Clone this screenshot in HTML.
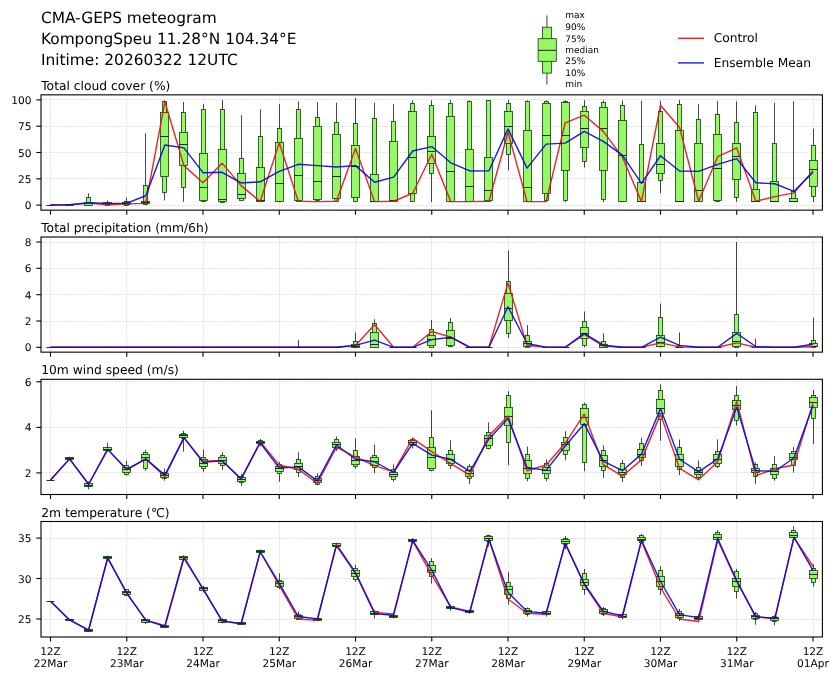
<!DOCTYPE html>
<html><head><meta charset="utf-8"><title>CMA-GEPS meteogram</title>
<style>html,body{margin:0;padding:0;background:#fff}svg{display:block;will-change:transform}text{font-family:"DejaVu Sans","Liberation Sans",sans-serif;fill:#000;text-rendering:geometricPrecision}.t{font-size:15.4px}.pt{font-size:12.3px}.tk{font-size:10.6px}.lg{font-size:12.25px}.bl{font-size:9px}.grid{stroke:#cccccc;stroke-opacity:0.7;stroke-width:0.7;stroke-dasharray:2.8 0.9;fill:none}.box{fill:#98f766;stroke:#0e4206;stroke-width:0.8}.wh{stroke:#000;stroke-opacity:0.85;stroke-width:0.85;fill:none}.md{stroke:#0a1a05;stroke-width:0.9;fill:none}.c{stroke:#e3141a;stroke-opacity:0.92;stroke-width:1.4;fill:none;stroke-linejoin:round}.m{stroke:#0808de;stroke-opacity:0.92;stroke-width:1.4;fill:none;stroke-linejoin:round}.ax{fill:none;stroke:#000;stroke-width:1.1}.tick{stroke:#000;stroke-width:1.1}</style></head><body>
<svg width="840" height="680" viewBox="0 0 840 680">
<rect width="840" height="680" fill="#fff"/>
<text class="t" x="40.9" y="22.5">CMA-GEPS meteogram</text>
<text class="t" x="40.9" y="43.6">KompongSpeu 11.28°N 104.34°E</text>
<text class="t" x="40.9" y="64.6">Initime: 20260322 12UTC</text>
<g><line class="wh" style="stroke-width:1.2;stroke:#444" x1="546.9" y1="15.4" x2="546.9" y2="84.6"/>
<rect class="box" x="542.5" y="27.2" width="9" height="45.9"/>
<rect class="box" x="538.1" y="38.7" width="18.2" height="22.6"/>
<line class="md" x1="538.1" y1="50.3" x2="556.3" y2="50.3"/></g>
<text class="bl" x="565.3" y="17.7">max</text>
<text class="bl" x="565.3" y="30.1">90%</text>
<text class="bl" x="565.3" y="41.6">75%</text>
<text class="bl" x="565.3" y="53.1">median</text>
<text class="bl" x="565.3" y="64.2">25%</text>
<text class="bl" x="565.3" y="75.8">10%</text>
<text class="bl" x="565.3" y="86.7">min</text>
<line class="c" style="stroke-width:1.4" x1="678" y1="38.3" x2="704" y2="38.3"/><text class="lg" x="713.7" y="42.2">Control</text>
<line class="m" style="stroke-width:1.4" x1="678" y1="62.9" x2="704" y2="62.9"/><text class="lg" x="713.7" y="67.2">Ensemble Mean</text>
<g>
<text class="pt" x="41.2" y="89.95">Total cloud cover (%)</text>
<line class="grid" x1="50.5" y1="94.85" x2="50.5" y2="210.15"/>
<line class="grid" x1="126.5" y1="94.85" x2="126.5" y2="210.15"/>
<line class="grid" x1="203.5" y1="94.85" x2="203.5" y2="210.15"/>
<line class="grid" x1="279.5" y1="94.85" x2="279.5" y2="210.15"/>
<line class="grid" x1="355.5" y1="94.85" x2="355.5" y2="210.15"/>
<line class="grid" x1="431.5" y1="94.85" x2="431.5" y2="210.15"/>
<line class="grid" x1="508.5" y1="94.85" x2="508.5" y2="210.15"/>
<line class="grid" x1="584.5" y1="94.85" x2="584.5" y2="210.15"/>
<line class="grid" x1="660.5" y1="94.85" x2="660.5" y2="210.15"/>
<line class="grid" x1="736.5" y1="94.85" x2="736.5" y2="210.15"/>
<line class="grid" x1="813.5" y1="94.85" x2="813.5" y2="210.15"/>
<line class="grid" x1="41" y1="99.5" x2="822.4" y2="99.5"/>
<line class="grid" x1="41" y1="126.5" x2="822.4" y2="126.5"/>
<line class="grid" x1="41" y1="152.5" x2="822.4" y2="152.5"/>
<line class="grid" x1="41" y1="178.5" x2="822.4" y2="178.5"/>
<line class="grid" x1="41" y1="205.5" x2="822.4" y2="205.5"/>
<rect class="box" x="67.5" y="204.5" width="4" height="1"/>
<rect class="box" x="65.5" y="204.5" width="8" height="1"/>
<rect class="box" x="86.5" y="197.5" width="4" height="8"/>
<rect class="box" x="84.5" y="202.5" width="8" height="3"/>
<rect class="box" x="105.5" y="202.5" width="4" height="3"/>
<rect class="box" x="103.5" y="202.5" width="8" height="2"/>
<rect class="box" x="124.5" y="201.5" width="4" height="4"/>
<rect class="box" x="122.5" y="202.5" width="8" height="2"/>
<rect class="box" x="143.5" y="185.5" width="4" height="19"/>
<rect class="box" x="141.5" y="201.5" width="8" height="2"/>
<rect class="box" x="162.5" y="101.5" width="4" height="91"/>
<rect class="box" x="160.5" y="112.5" width="8" height="64"/>
<rect class="box" x="181.5" y="112.5" width="4" height="75"/>
<rect class="box" x="179.5" y="132.5" width="8" height="33"/>
<rect class="box" x="201.5" y="109.5" width="4" height="92"/>
<rect class="box" x="199.5" y="153.5" width="8" height="47"/>
<rect class="box" x="220.5" y="109.5" width="4" height="93"/>
<rect class="box" x="218.5" y="149.5" width="8" height="52"/>
<rect class="box" x="239.5" y="158.5" width="4" height="42"/>
<rect class="box" x="237.5" y="173.5" width="8" height="25"/>
<rect class="box" x="258.5" y="136.5" width="4" height="65"/>
<rect class="box" x="256.5" y="167.5" width="8" height="34"/>
<rect class="box" x="277.5" y="128.5" width="4" height="73"/>
<rect class="box" x="275.5" y="142.5" width="8" height="59"/>
<rect class="box" x="296.5" y="109.5" width="4" height="92"/>
<rect class="box" x="294.5" y="138.5" width="8" height="62"/>
<rect class="box" x="315.5" y="117.5" width="4" height="83"/>
<rect class="box" x="313.5" y="126.5" width="8" height="73"/>
<rect class="box" x="334.5" y="122.5" width="4" height="79"/>
<rect class="box" x="332.5" y="134.5" width="8" height="64"/>
<rect class="box" x="353.5" y="123.5" width="4" height="78"/>
<rect class="box" x="351.5" y="145.5" width="8" height="52"/>
<rect class="box" x="372.5" y="118.5" width="4" height="83"/>
<rect class="box" x="370.5" y="174.5" width="8" height="27"/>
<rect class="box" x="391.5" y="121.5" width="4" height="80"/>
<rect class="box" x="389.5" y="141.5" width="8" height="60"/>
<rect class="box" x="410.5" y="103.5" width="4" height="98"/>
<rect class="box" x="408.5" y="111.5" width="8" height="82"/>
<rect class="box" x="429.5" y="105.5" width="4" height="68"/>
<rect class="box" x="427.5" y="136.5" width="8" height="27"/>
<rect class="box" x="448.5" y="103.5" width="4" height="98"/>
<rect class="box" x="446.5" y="116.5" width="8" height="85"/>
<rect class="box" x="467.5" y="101.5" width="4" height="100"/>
<rect class="box" x="465.5" y="149.5" width="8" height="52"/>
<rect class="box" x="486.5" y="100.5" width="4" height="101"/>
<rect class="box" x="484.5" y="157.5" width="8" height="43"/>
<rect class="box" x="506.5" y="103.5" width="4" height="51"/>
<rect class="box" x="504.5" y="111.5" width="8" height="32"/>
<rect class="box" x="525.5" y="101.5" width="4" height="100"/>
<rect class="box" x="523.5" y="130.5" width="8" height="71"/>
<rect class="box" x="544.5" y="101.5" width="4" height="99"/>
<rect class="box" x="542.5" y="103.5" width="8" height="90"/>
<rect class="box" x="563.5" y="101.5" width="4" height="99"/>
<rect class="box" x="561.5" y="102.5" width="8" height="68"/>
<rect class="box" x="582.5" y="106.5" width="4" height="55"/>
<rect class="box" x="580.5" y="111.5" width="8" height="36"/>
<rect class="box" x="601.5" y="102.5" width="4" height="97"/>
<rect class="box" x="599.5" y="107.5" width="8" height="63"/>
<rect class="box" x="620.5" y="105.5" width="4" height="96"/>
<rect class="box" x="618.5" y="120.5" width="8" height="81"/>
<rect class="box" x="639.5" y="144.5" width="4" height="57"/>
<rect class="box" x="637.5" y="182.5" width="8" height="19"/>
<rect class="box" x="658.5" y="111.5" width="4" height="69"/>
<rect class="box" x="656.5" y="143.5" width="8" height="30"/>
<rect class="box" x="677.5" y="104.5" width="4" height="97"/>
<rect class="box" x="675.5" y="130.5" width="8" height="71"/>
<rect class="box" x="696.5" y="119.5" width="4" height="82"/>
<rect class="box" x="694.5" y="143.5" width="8" height="58"/>
<rect class="box" x="715.5" y="114.5" width="4" height="87"/>
<rect class="box" x="713.5" y="134.5" width="8" height="66"/>
<rect class="box" x="734.5" y="122.5" width="4" height="75"/>
<rect class="box" x="732.5" y="143.5" width="8" height="36"/>
<rect class="box" x="753.5" y="112.5" width="4" height="89"/>
<rect class="box" x="751.5" y="189.5" width="8" height="12"/>
<rect class="box" x="772.5" y="143.5" width="4" height="58"/>
<rect class="box" x="770.5" y="181.5" width="8" height="20"/>
<rect class="box" x="791.5" y="191.5" width="4" height="10"/>
<rect class="box" x="789.5" y="198.5" width="8" height="3"/>
<rect class="box" x="811.5" y="145.5" width="4" height="51"/>
<rect class="box" x="809.5" y="160.5" width="8" height="26"/>
<line class="md" x1="46.5" y1="205.5" x2="54.5" y2="205.5"/>
<line class="wh" x1="69.5" y1="204.3" x2="69.5" y2="204.5"/>
<line class="md" x1="65.5" y1="204.5" x2="73.5" y2="204.5"/>
<line class="wh" x1="88.5" y1="193.25" x2="88.5" y2="197.5"/>
<line class="md" x1="84.5" y1="203.5" x2="92.5" y2="203.5"/>
<line class="wh" x1="107.5" y1="200.49" x2="107.5" y2="202.5"/>
<line class="md" x1="103.5" y1="204.5" x2="111.5" y2="204.5"/>
<line class="wh" x1="126.5" y1="197.44" x2="126.5" y2="201.5"/>
<line class="md" x1="122.5" y1="203.5" x2="130.5" y2="203.5"/>
<line class="wh" x1="145.5" y1="133.25" x2="145.5" y2="185.5"/>
<line class="wh" x1="145.5" y1="204.5" x2="145.5" y2="205.06"/>
<line class="md" x1="141.5" y1="202.5" x2="149.5" y2="202.5"/>
<line class="wh" x1="164.5" y1="100.3" x2="164.5" y2="101.5"/>
<line class="wh" x1="164.5" y1="192.5" x2="164.5" y2="200.49"/>
<line class="md" x1="160.5" y1="136.5" x2="168.5" y2="136.5"/>
<line class="wh" x1="183.5" y1="101.82" x2="183.5" y2="112.5"/>
<line class="wh" x1="183.5" y1="187.5" x2="183.5" y2="201.82"/>
<line class="md" x1="179.5" y1="144.5" x2="187.5" y2="144.5"/>
<line class="wh" x1="203.5" y1="104.11" x2="203.5" y2="109.5"/>
<line class="wh" x1="203.5" y1="201.5" x2="203.5" y2="202.01"/>
<line class="md" x1="199.5" y1="187.5" x2="207.5" y2="187.5"/>
<line class="wh" x1="222.5" y1="99.92" x2="222.5" y2="109.5"/>
<line class="md" x1="218.5" y1="199.5" x2="226.5" y2="199.5"/>
<line class="wh" x1="241.5" y1="115.16" x2="241.5" y2="158.5"/>
<line class="wh" x1="241.5" y1="200.5" x2="241.5" y2="200.49"/>
<line class="md" x1="237.5" y1="194.5" x2="245.5" y2="194.5"/>
<line class="wh" x1="260.5" y1="109.44" x2="260.5" y2="136.5"/>
<line class="wh" x1="260.5" y1="201.5" x2="260.5" y2="202.01"/>
<line class="md" x1="256.5" y1="200.5" x2="264.5" y2="200.5"/>
<line class="wh" x1="279.5" y1="104.11" x2="279.5" y2="128.5"/>
<line class="wh" x1="279.5" y1="201.5" x2="279.5" y2="202.01"/>
<line class="md" x1="275.5" y1="183.5" x2="283.5" y2="183.5"/>
<line class="wh" x1="298.5" y1="101.44" x2="298.5" y2="109.5"/>
<line class="wh" x1="298.5" y1="201.5" x2="298.5" y2="202.01"/>
<line class="md" x1="294.5" y1="175.5" x2="302.5" y2="175.5"/>
<line class="wh" x1="317.5" y1="102.2" x2="317.5" y2="117.5"/>
<line class="wh" x1="317.5" y1="200.5" x2="317.5" y2="201.63"/>
<line class="md" x1="313.5" y1="181.5" x2="321.5" y2="181.5"/>
<line class="wh" x1="336.5" y1="102.78" x2="336.5" y2="122.5"/>
<line class="wh" x1="336.5" y1="201.5" x2="336.5" y2="202.01"/>
<line class="md" x1="332.5" y1="176.5" x2="340.5" y2="176.5"/>
<line class="wh" x1="355.5" y1="98.01" x2="355.5" y2="123.5"/>
<line class="wh" x1="355.5" y1="201.5" x2="355.5" y2="202.01"/>
<line class="md" x1="351.5" y1="166.5" x2="359.5" y2="166.5"/>
<line class="wh" x1="374.5" y1="102.78" x2="374.5" y2="118.5"/>
<line class="wh" x1="374.5" y1="201.5" x2="374.5" y2="202.01"/>
<line class="md" x1="370.5" y1="201.5" x2="378.5" y2="201.5"/>
<line class="wh" x1="393.5" y1="104.11" x2="393.5" y2="121.5"/>
<line class="wh" x1="393.5" y1="201.5" x2="393.5" y2="202.01"/>
<line class="md" x1="389.5" y1="200.5" x2="397.5" y2="200.5"/>
<line class="wh" x1="412.5" y1="100.3" x2="412.5" y2="103.5"/>
<line class="wh" x1="412.5" y1="201.5" x2="412.5" y2="202.01"/>
<line class="md" x1="408.5" y1="157.5" x2="416.5" y2="157.5"/>
<line class="wh" x1="431.5" y1="100.3" x2="431.5" y2="105.5"/>
<line class="wh" x1="431.5" y1="173.5" x2="431.5" y2="202.01"/>
<line class="md" x1="427.5" y1="151.5" x2="435.5" y2="151.5"/>
<line class="wh" x1="450.5" y1="99.92" x2="450.5" y2="103.5"/>
<line class="wh" x1="450.5" y1="201.5" x2="450.5" y2="202.01"/>
<line class="md" x1="446.5" y1="171.5" x2="454.5" y2="171.5"/>
<line class="wh" x1="469.5" y1="100.3" x2="469.5" y2="101.5"/>
<line class="wh" x1="469.5" y1="201.5" x2="469.5" y2="202.01"/>
<line class="md" x1="465.5" y1="186.5" x2="473.5" y2="186.5"/>
<line class="wh" x1="488.5" y1="99.92" x2="488.5" y2="100.5"/>
<line class="wh" x1="488.5" y1="201.5" x2="488.5" y2="202.01"/>
<line class="md" x1="484.5" y1="190.5" x2="492.5" y2="190.5"/>
<line class="wh" x1="508.5" y1="99.92" x2="508.5" y2="103.5"/>
<line class="wh" x1="508.5" y1="154.5" x2="508.5" y2="170.4"/>
<line class="md" x1="504.5" y1="126.5" x2="512.5" y2="126.5"/>
<line class="wh" x1="527.5" y1="100.3" x2="527.5" y2="101.5"/>
<line class="wh" x1="527.5" y1="201.5" x2="527.5" y2="202.01"/>
<line class="md" x1="523.5" y1="187.5" x2="531.5" y2="187.5"/>
<line class="wh" x1="546.5" y1="100.3" x2="546.5" y2="101.5"/>
<line class="wh" x1="546.5" y1="200.5" x2="546.5" y2="202.01"/>
<line class="md" x1="542.5" y1="135.5" x2="550.5" y2="135.5"/>
<line class="wh" x1="565.5" y1="100.3" x2="565.5" y2="101.5"/>
<line class="wh" x1="565.5" y1="200.5" x2="565.5" y2="202.01"/>
<line class="md" x1="561.5" y1="135.5" x2="569.5" y2="135.5"/>
<line class="wh" x1="584.5" y1="100.3" x2="584.5" y2="106.5"/>
<line class="wh" x1="584.5" y1="161.5" x2="584.5" y2="167.54"/>
<line class="md" x1="580.5" y1="128.5" x2="588.5" y2="128.5"/>
<line class="wh" x1="603.5" y1="100.3" x2="603.5" y2="102.5"/>
<line class="wh" x1="603.5" y1="199.5" x2="603.5" y2="202.01"/>
<line class="md" x1="599.5" y1="128.5" x2="607.5" y2="128.5"/>
<line class="wh" x1="622.5" y1="100.3" x2="622.5" y2="105.5"/>
<line class="wh" x1="622.5" y1="201.5" x2="622.5" y2="202.01"/>
<line class="md" x1="618.5" y1="155.5" x2="626.5" y2="155.5"/>
<line class="wh" x1="641.5" y1="100.87" x2="641.5" y2="144.5"/>
<line class="wh" x1="641.5" y1="201.5" x2="641.5" y2="202.01"/>
<line class="md" x1="637.5" y1="201.5" x2="645.5" y2="201.5"/>
<line class="wh" x1="660.5" y1="100.87" x2="660.5" y2="111.5"/>
<line class="wh" x1="660.5" y1="180.5" x2="660.5" y2="193.25"/>
<line class="md" x1="656.5" y1="164.5" x2="664.5" y2="164.5"/>
<line class="wh" x1="679.5" y1="99.92" x2="679.5" y2="104.5"/>
<line class="wh" x1="679.5" y1="201.5" x2="679.5" y2="202.01"/>
<line class="md" x1="675.5" y1="201.5" x2="683.5" y2="201.5"/>
<line class="wh" x1="698.5" y1="104.11" x2="698.5" y2="119.5"/>
<line class="wh" x1="698.5" y1="201.5" x2="698.5" y2="202.01"/>
<line class="md" x1="694.5" y1="190.5" x2="702.5" y2="190.5"/>
<line class="wh" x1="717.5" y1="100.87" x2="717.5" y2="114.5"/>
<line class="wh" x1="717.5" y1="201.5" x2="717.5" y2="202.01"/>
<line class="md" x1="713.5" y1="168.5" x2="721.5" y2="168.5"/>
<line class="wh" x1="736.5" y1="101.44" x2="736.5" y2="122.5"/>
<line class="wh" x1="736.5" y1="197.5" x2="736.5" y2="201.82"/>
<line class="md" x1="732.5" y1="156.5" x2="740.5" y2="156.5"/>
<line class="wh" x1="755.5" y1="105.25" x2="755.5" y2="112.5"/>
<line class="wh" x1="755.5" y1="201.5" x2="755.5" y2="202.01"/>
<line class="md" x1="751.5" y1="201.5" x2="759.5" y2="201.5"/>
<line class="wh" x1="774.5" y1="102.78" x2="774.5" y2="143.5"/>
<line class="wh" x1="774.5" y1="201.5" x2="774.5" y2="202.01"/>
<line class="md" x1="770.5" y1="201.5" x2="778.5" y2="201.5"/>
<line class="wh" x1="793.5" y1="101.44" x2="793.5" y2="191.5"/>
<line class="wh" x1="793.5" y1="201.5" x2="793.5" y2="202.01"/>
<line class="md" x1="789.5" y1="201.5" x2="797.5" y2="201.5"/>
<line class="wh" x1="813.5" y1="128.87" x2="813.5" y2="145.5"/>
<line class="wh" x1="813.5" y1="196.5" x2="813.5" y2="202.01"/>
<line class="md" x1="809.5" y1="169.5" x2="817.5" y2="169.5"/>
<polyline class="c" points="50.5,205.06 69.56,204.87 88.62,203.16 107.69,204.68 126.75,203.92 145.81,203.35 164.88,101.82 183.94,165.63 203,182.78 222.06,163.16 241.12,185.63 260.19,201.44 279.25,142.78 298.31,201.25 317.38,201.63 336.44,201.25 355.5,148.49 374.56,201.63 393.62,201.25 412.69,193.25 431.75,154.2 450.81,201.63 469.88,201.63 488.94,201.25 508,132.3 527.06,201.63 546.12,201.63 565.19,122.78 584.25,115.16 603.31,131.35 622.38,157.06 641.44,201.63 660.5,105.25 679.56,127.54 698.62,201.25 717.69,156.68 736.75,147.92 755.81,201.25 774.88,196.68 793.94,192.87 813,170.78"/>
<polyline class="m" points="50.5,205.06 69.56,204.68 88.62,202.78 107.69,203.54 126.75,203.16 145.81,195.73 164.88,145.06 183.94,147.92 203,172.68 222.06,172.3 241.12,182.97 260.19,181.82 279.25,171.35 298.31,164.3 317.38,165.63 336.44,166.97 355.5,165.63 374.56,182.2 393.62,177.06 412.69,150.97 431.75,146.59 450.81,162.78 469.88,170.97 488.94,170.78 508,128.87 527.06,168.11 546.12,144.11 565.19,143.16 584.25,131.35 603.31,141.44 622.38,155.16 641.44,183.35 660.5,155.73 679.56,170.97 698.62,171.35 717.69,164.3 736.75,158.59 755.81,182.78 774.88,183.73 793.94,191.35 813,172.3"/>
<rect class="ax" x="41" y="94.85" width="781.4" height="115.3"/>
<line class="tick" x1="50.5" y1="210.15" x2="50.5" y2="214.75"/>
<line class="tick" x1="126.75" y1="210.15" x2="126.75" y2="214.75"/>
<line class="tick" x1="203" y1="210.15" x2="203" y2="214.75"/>
<line class="tick" x1="279.25" y1="210.15" x2="279.25" y2="214.75"/>
<line class="tick" x1="355.5" y1="210.15" x2="355.5" y2="214.75"/>
<line class="tick" x1="431.75" y1="210.15" x2="431.75" y2="214.75"/>
<line class="tick" x1="508" y1="210.15" x2="508" y2="214.75"/>
<line class="tick" x1="584.25" y1="210.15" x2="584.25" y2="214.75"/>
<line class="tick" x1="660.5" y1="210.15" x2="660.5" y2="214.75"/>
<line class="tick" x1="736.75" y1="210.15" x2="736.75" y2="214.75"/>
<line class="tick" x1="813" y1="210.15" x2="813" y2="214.75"/>
<line class="tick" x1="36.3" y1="99.9" x2="41" y2="99.9"/>
<text class="tk" text-anchor="end" x="31.6" y="103.9">100</text>
<line class="tick" x1="36.3" y1="126.2" x2="41" y2="126.2"/>
<text class="tk" text-anchor="end" x="31.6" y="130.2">75</text>
<line class="tick" x1="36.3" y1="152.5" x2="41" y2="152.5"/>
<text class="tk" text-anchor="end" x="31.6" y="156.5">50</text>
<line class="tick" x1="36.3" y1="178.8" x2="41" y2="178.8"/>
<text class="tk" text-anchor="end" x="31.6" y="182.8">25</text>
<line class="tick" x1="36.3" y1="205.1" x2="41" y2="205.1"/>
<text class="tk" text-anchor="end" x="31.6" y="209.1">0</text>
</g>
<g>
<text class="pt" x="41.2" y="232.1">Total precipitation (mm/6h)</text>
<line class="grid" x1="50.5" y1="237" x2="50.5" y2="352.15"/>
<line class="grid" x1="126.5" y1="237" x2="126.5" y2="352.15"/>
<line class="grid" x1="203.5" y1="237" x2="203.5" y2="352.15"/>
<line class="grid" x1="279.5" y1="237" x2="279.5" y2="352.15"/>
<line class="grid" x1="355.5" y1="237" x2="355.5" y2="352.15"/>
<line class="grid" x1="431.5" y1="237" x2="431.5" y2="352.15"/>
<line class="grid" x1="508.5" y1="237" x2="508.5" y2="352.15"/>
<line class="grid" x1="584.5" y1="237" x2="584.5" y2="352.15"/>
<line class="grid" x1="660.5" y1="237" x2="660.5" y2="352.15"/>
<line class="grid" x1="736.5" y1="237" x2="736.5" y2="352.15"/>
<line class="grid" x1="813.5" y1="237" x2="813.5" y2="352.15"/>
<line class="grid" x1="41" y1="242.5" x2="822.4" y2="242.5"/>
<line class="grid" x1="41" y1="268.5" x2="822.4" y2="268.5"/>
<line class="grid" x1="41" y1="294.5" x2="822.4" y2="294.5"/>
<line class="grid" x1="41" y1="321.5" x2="822.4" y2="321.5"/>
<line class="grid" x1="41" y1="347.5" x2="822.4" y2="347.5"/>
<rect class="box" x="353.5" y="341.5" width="4" height="6"/>
<rect class="box" x="351.5" y="344.5" width="8" height="3"/>
<rect class="box" x="372.5" y="323.5" width="4" height="24"/>
<rect class="box" x="370.5" y="332.5" width="8" height="15"/>
<rect class="box" x="429.5" y="329.5" width="4" height="18"/>
<rect class="box" x="427.5" y="335.5" width="8" height="10"/>
<rect class="box" x="448.5" y="322.5" width="4" height="24"/>
<rect class="box" x="446.5" y="330.5" width="8" height="15"/>
<rect class="box" x="506.5" y="281.5" width="4" height="52"/>
<rect class="box" x="504.5" y="293.5" width="8" height="27"/>
<rect class="box" x="525.5" y="335.5" width="4" height="12"/>
<rect class="box" x="523.5" y="341.5" width="8" height="5"/>
<rect class="box" x="582.5" y="321.5" width="4" height="24"/>
<rect class="box" x="580.5" y="327.5" width="8" height="11"/>
<rect class="box" x="601.5" y="341.5" width="4" height="6"/>
<rect class="box" x="599.5" y="344.5" width="8" height="3"/>
<rect class="box" x="658.5" y="317.5" width="4" height="29"/>
<rect class="box" x="656.5" y="335.5" width="8" height="11"/>
<rect class="box" x="677.5" y="345.5" width="4" height="2"/>
<rect class="box" x="734.5" y="314.5" width="4" height="33"/>
<rect class="box" x="732.5" y="332.5" width="8" height="14"/>
<rect class="box" x="811.5" y="340.5" width="4" height="7"/>
<rect class="box" x="809.5" y="343.5" width="8" height="3"/>
<line class="md" x1="46.5" y1="347.5" x2="54.5" y2="347.5"/>
<line class="md" x1="65.5" y1="347.5" x2="73.5" y2="347.5"/>
<line class="md" x1="84.5" y1="347.5" x2="92.5" y2="347.5"/>
<line class="md" x1="103.5" y1="347.5" x2="111.5" y2="347.5"/>
<line class="md" x1="122.5" y1="347.5" x2="130.5" y2="347.5"/>
<line class="md" x1="141.5" y1="347.5" x2="149.5" y2="347.5"/>
<line class="md" x1="160.5" y1="347.5" x2="168.5" y2="347.5"/>
<line class="md" x1="179.5" y1="347.5" x2="187.5" y2="347.5"/>
<line class="md" x1="199.5" y1="347.5" x2="207.5" y2="347.5"/>
<line class="md" x1="218.5" y1="347.5" x2="226.5" y2="347.5"/>
<line class="md" x1="237.5" y1="347.5" x2="245.5" y2="347.5"/>
<line class="md" x1="256.5" y1="347.5" x2="264.5" y2="347.5"/>
<line class="md" x1="275.5" y1="347.5" x2="283.5" y2="347.5"/>
<line class="wh" x1="298.5" y1="339.68" x2="298.5" y2="347.5"/>
<line class="md" x1="294.5" y1="347.5" x2="302.5" y2="347.5"/>
<line class="md" x1="313.5" y1="347.5" x2="321.5" y2="347.5"/>
<line class="md" x1="332.5" y1="347.5" x2="340.5" y2="347.5"/>
<line class="wh" x1="355.5" y1="332.44" x2="355.5" y2="341.5"/>
<line class="md" x1="351.5" y1="346.5" x2="359.5" y2="346.5"/>
<line class="wh" x1="374.5" y1="319.11" x2="374.5" y2="323.5"/>
<line class="md" x1="370.5" y1="344.5" x2="378.5" y2="344.5"/>
<line class="md" x1="389.5" y1="347.5" x2="397.5" y2="347.5"/>
<line class="md" x1="408.5" y1="347.5" x2="416.5" y2="347.5"/>
<line class="wh" x1="431.5" y1="320.06" x2="431.5" y2="329.5"/>
<line class="md" x1="427.5" y1="339.5" x2="435.5" y2="339.5"/>
<line class="wh" x1="450.5" y1="318.16" x2="450.5" y2="322.5"/>
<line class="wh" x1="450.5" y1="346.5" x2="450.5" y2="347.3"/>
<line class="md" x1="446.5" y1="338.5" x2="454.5" y2="338.5"/>
<line class="md" x1="465.5" y1="347.5" x2="473.5" y2="347.5"/>
<line class="md" x1="484.5" y1="347.5" x2="492.5" y2="347.5"/>
<line class="wh" x1="508.5" y1="250.54" x2="508.5" y2="281.5"/>
<line class="wh" x1="508.5" y1="333.5" x2="508.5" y2="338.16"/>
<line class="md" x1="504.5" y1="308.5" x2="512.5" y2="308.5"/>
<line class="wh" x1="527.5" y1="325.2" x2="527.5" y2="335.5"/>
<line class="md" x1="523.5" y1="343.5" x2="531.5" y2="343.5"/>
<line class="md" x1="542.5" y1="347.5" x2="550.5" y2="347.5"/>
<line class="md" x1="561.5" y1="347.5" x2="569.5" y2="347.5"/>
<line class="wh" x1="584.5" y1="311.49" x2="584.5" y2="321.5"/>
<line class="wh" x1="584.5" y1="345.5" x2="584.5" y2="347.3"/>
<line class="md" x1="580.5" y1="333.5" x2="588.5" y2="333.5"/>
<line class="wh" x1="603.5" y1="333.4" x2="603.5" y2="341.5"/>
<line class="md" x1="599.5" y1="345.5" x2="607.5" y2="345.5"/>
<line class="md" x1="618.5" y1="347.5" x2="626.5" y2="347.5"/>
<line class="md" x1="637.5" y1="347.5" x2="645.5" y2="347.5"/>
<line class="wh" x1="660.5" y1="303.49" x2="660.5" y2="317.5"/>
<line class="wh" x1="660.5" y1="346.5" x2="660.5" y2="347.3"/>
<line class="md" x1="656.5" y1="342.5" x2="664.5" y2="342.5"/>
<line class="wh" x1="679.5" y1="332.44" x2="679.5" y2="345.5"/>
<line class="md" x1="675.5" y1="347.5" x2="683.5" y2="347.5"/>
<line class="md" x1="694.5" y1="347.5" x2="702.5" y2="347.5"/>
<line class="md" x1="713.5" y1="347.5" x2="721.5" y2="347.5"/>
<line class="wh" x1="736.5" y1="241.97" x2="736.5" y2="314.5"/>
<line class="md" x1="732.5" y1="341.5" x2="740.5" y2="341.5"/>
<line class="wh" x1="755.5" y1="338.54" x2="755.5" y2="347.5"/>
<line class="md" x1="751.5" y1="347.5" x2="759.5" y2="347.5"/>
<line class="md" x1="770.5" y1="347.5" x2="778.5" y2="347.5"/>
<line class="md" x1="789.5" y1="347.5" x2="797.5" y2="347.5"/>
<line class="wh" x1="813.5" y1="317.59" x2="813.5" y2="340.5"/>
<line class="md" x1="809.5" y1="346.5" x2="817.5" y2="346.5"/>
<polyline class="c" points="50.5,347.3 69.56,347.3 88.62,347.3 107.69,347.3 126.75,347.3 145.81,347.3 164.88,347.3 183.94,347.3 203,347.3 222.06,347.3 241.12,347.3 260.19,347.3 279.25,347.3 298.31,347.3 317.38,347.3 336.44,347.3 355.5,345.4 374.56,324.82 393.62,347.3 412.69,347.3 431.75,331.49 450.81,337.2 469.88,347.3 488.94,347.3 508,282.92 527.06,345.4 546.12,347.3 565.19,347.3 584.25,334.35 603.31,345.78 622.38,347.3 641.44,347.3 660.5,342.92 679.56,346.92 698.62,347.3 717.69,347.3 736.75,342.92 755.81,347.3 774.88,347.3 793.94,347.3 813,346.73"/>
<polyline class="m" points="50.5,347.3 69.56,347.3 88.62,347.3 107.69,347.3 126.75,347.3 145.81,347.3 164.88,347.3 183.94,347.3 203,347.3 222.06,347.3 241.12,347.3 260.19,347.3 279.25,347.3 298.31,347.3 317.38,347.3 336.44,347.3 355.5,345.4 374.56,340.06 393.62,347.3 412.69,347.3 431.75,339.68 450.81,337.2 469.88,347.3 488.94,347.3 508,306.73 527.06,343.49 546.12,347.11 565.19,347.3 584.25,333.4 603.31,345.2 622.38,347.3 641.44,347.3 660.5,337.2 679.56,345.4 698.62,347.3 717.69,347.3 736.75,333.4 755.81,346.54 774.88,347.3 793.94,347.3 813,344.25"/>
<rect class="ax" x="41" y="237" width="781.4" height="115.15"/>
<line class="tick" x1="50.5" y1="352.15" x2="50.5" y2="356.75"/>
<line class="tick" x1="126.75" y1="352.15" x2="126.75" y2="356.75"/>
<line class="tick" x1="203" y1="352.15" x2="203" y2="356.75"/>
<line class="tick" x1="279.25" y1="352.15" x2="279.25" y2="356.75"/>
<line class="tick" x1="355.5" y1="352.15" x2="355.5" y2="356.75"/>
<line class="tick" x1="431.75" y1="352.15" x2="431.75" y2="356.75"/>
<line class="tick" x1="508" y1="352.15" x2="508" y2="356.75"/>
<line class="tick" x1="584.25" y1="352.15" x2="584.25" y2="356.75"/>
<line class="tick" x1="660.5" y1="352.15" x2="660.5" y2="356.75"/>
<line class="tick" x1="736.75" y1="352.15" x2="736.75" y2="356.75"/>
<line class="tick" x1="813" y1="352.15" x2="813" y2="356.75"/>
<line class="tick" x1="36.3" y1="242" x2="41" y2="242"/>
<text class="tk" text-anchor="end" x="31.6" y="246">8</text>
<line class="tick" x1="36.3" y1="268.3" x2="41" y2="268.3"/>
<text class="tk" text-anchor="end" x="31.6" y="272.3">6</text>
<line class="tick" x1="36.3" y1="294.7" x2="41" y2="294.7"/>
<text class="tk" text-anchor="end" x="31.6" y="298.7">4</text>
<line class="tick" x1="36.3" y1="321" x2="41" y2="321"/>
<text class="tk" text-anchor="end" x="31.6" y="325">2</text>
<line class="tick" x1="36.3" y1="347.3" x2="41" y2="347.3"/>
<text class="tk" text-anchor="end" x="31.6" y="351.3">0</text>
</g>
<g>
<text class="pt" x="41.2" y="374.4">10m wind speed (m/s)</text>
<line class="grid" x1="50.5" y1="379.3" x2="50.5" y2="494.5"/>
<line class="grid" x1="126.5" y1="379.3" x2="126.5" y2="494.5"/>
<line class="grid" x1="203.5" y1="379.3" x2="203.5" y2="494.5"/>
<line class="grid" x1="279.5" y1="379.3" x2="279.5" y2="494.5"/>
<line class="grid" x1="355.5" y1="379.3" x2="355.5" y2="494.5"/>
<line class="grid" x1="431.5" y1="379.3" x2="431.5" y2="494.5"/>
<line class="grid" x1="508.5" y1="379.3" x2="508.5" y2="494.5"/>
<line class="grid" x1="584.5" y1="379.3" x2="584.5" y2="494.5"/>
<line class="grid" x1="660.5" y1="379.3" x2="660.5" y2="494.5"/>
<line class="grid" x1="736.5" y1="379.3" x2="736.5" y2="494.5"/>
<line class="grid" x1="813.5" y1="379.3" x2="813.5" y2="494.5"/>
<line class="grid" x1="41" y1="381.5" x2="822.4" y2="381.5"/>
<line class="grid" x1="41" y1="427.5" x2="822.4" y2="427.5"/>
<line class="grid" x1="41" y1="472.5" x2="822.4" y2="472.5"/>
<rect class="box" x="67.5" y="457.5" width="4" height="2"/>
<rect class="box" x="65.5" y="457.5" width="8" height="2"/>
<rect class="box" x="86.5" y="483.5" width="4" height="3"/>
<rect class="box" x="84.5" y="483.5" width="8" height="3"/>
<rect class="box" x="105.5" y="447.5" width="4" height="3"/>
<rect class="box" x="103.5" y="447.5" width="8" height="3"/>
<rect class="box" x="124.5" y="465.5" width="4" height="9"/>
<rect class="box" x="122.5" y="467.5" width="8" height="5"/>
<rect class="box" x="143.5" y="452.5" width="4" height="16"/>
<rect class="box" x="141.5" y="454.5" width="8" height="6"/>
<rect class="box" x="162.5" y="472.5" width="4" height="6"/>
<rect class="box" x="160.5" y="473.5" width="8" height="4"/>
<rect class="box" x="181.5" y="433.5" width="4" height="5"/>
<rect class="box" x="179.5" y="434.5" width="8" height="3"/>
<rect class="box" x="201.5" y="457.5" width="4" height="11"/>
<rect class="box" x="199.5" y="459.5" width="8" height="7"/>
<rect class="box" x="220.5" y="455.5" width="4" height="10"/>
<rect class="box" x="218.5" y="457.5" width="8" height="6"/>
<rect class="box" x="239.5" y="476.5" width="4" height="6"/>
<rect class="box" x="237.5" y="477.5" width="8" height="4"/>
<rect class="box" x="258.5" y="440.5" width="4" height="3"/>
<rect class="box" x="256.5" y="441.5" width="8" height="2"/>
<rect class="box" x="277.5" y="464.5" width="4" height="9"/>
<rect class="box" x="275.5" y="466.5" width="8" height="5"/>
<rect class="box" x="296.5" y="459.5" width="4" height="13"/>
<rect class="box" x="294.5" y="463.5" width="8" height="6"/>
<rect class="box" x="315.5" y="476.5" width="4" height="8"/>
<rect class="box" x="313.5" y="478.5" width="8" height="4"/>
<rect class="box" x="334.5" y="439.5" width="4" height="9"/>
<rect class="box" x="332.5" y="442.5" width="8" height="5"/>
<rect class="box" x="353.5" y="450.5" width="4" height="16"/>
<rect class="box" x="351.5" y="456.5" width="8" height="8"/>
<rect class="box" x="372.5" y="455.5" width="4" height="12"/>
<rect class="box" x="370.5" y="457.5" width="8" height="8"/>
<rect class="box" x="391.5" y="469.5" width="4" height="10"/>
<rect class="box" x="389.5" y="472.5" width="8" height="4"/>
<rect class="box" x="410.5" y="439.5" width="4" height="6"/>
<rect class="box" x="408.5" y="440.5" width="8" height="4"/>
<rect class="box" x="429.5" y="437.5" width="4" height="33"/>
<rect class="box" x="427.5" y="447.5" width="8" height="21"/>
<rect class="box" x="448.5" y="450.5" width="4" height="15"/>
<rect class="box" x="446.5" y="454.5" width="8" height="9"/>
<rect class="box" x="467.5" y="466.5" width="4" height="12"/>
<rect class="box" x="465.5" y="470.5" width="8" height="6"/>
<rect class="box" x="486.5" y="432.5" width="4" height="16"/>
<rect class="box" x="484.5" y="435.5" width="8" height="10"/>
<rect class="box" x="506.5" y="395.5" width="4" height="47"/>
<rect class="box" x="504.5" y="407.5" width="8" height="18"/>
<rect class="box" x="525.5" y="454.5" width="4" height="24"/>
<rect class="box" x="523.5" y="460.5" width="8" height="13"/>
<rect class="box" x="544.5" y="463.5" width="4" height="15"/>
<rect class="box" x="542.5" y="467.5" width="8" height="6"/>
<rect class="box" x="563.5" y="437.5" width="4" height="17"/>
<rect class="box" x="561.5" y="442.5" width="8" height="8"/>
<rect class="box" x="582.5" y="404.5" width="4" height="58"/>
<rect class="box" x="580.5" y="408.5" width="8" height="16"/>
<rect class="box" x="601.5" y="450.5" width="4" height="20"/>
<rect class="box" x="599.5" y="455.5" width="8" height="11"/>
<rect class="box" x="620.5" y="463.5" width="4" height="14"/>
<rect class="box" x="618.5" y="469.5" width="8" height="5"/>
<rect class="box" x="639.5" y="443.5" width="4" height="17"/>
<rect class="box" x="637.5" y="449.5" width="8" height="8"/>
<rect class="box" x="658.5" y="390.5" width="4" height="29"/>
<rect class="box" x="656.5" y="399.5" width="8" height="14"/>
<rect class="box" x="677.5" y="447.5" width="4" height="22"/>
<rect class="box" x="675.5" y="454.5" width="8" height="12"/>
<rect class="box" x="696.5" y="467.5" width="4" height="10"/>
<rect class="box" x="694.5" y="470.5" width="8" height="4"/>
<rect class="box" x="715.5" y="451.5" width="4" height="15"/>
<rect class="box" x="713.5" y="454.5" width="8" height="9"/>
<rect class="box" x="734.5" y="395.5" width="4" height="25"/>
<rect class="box" x="732.5" y="400.5" width="8" height="9"/>
<rect class="box" x="753.5" y="464.5" width="4" height="12"/>
<rect class="box" x="751.5" y="468.5" width="8" height="4"/>
<rect class="box" x="772.5" y="464.5" width="4" height="14"/>
<rect class="box" x="770.5" y="468.5" width="8" height="6"/>
<rect class="box" x="791.5" y="451.5" width="4" height="14"/>
<rect class="box" x="789.5" y="453.5" width="8" height="6"/>
<rect class="box" x="811.5" y="395.5" width="4" height="23"/>
<rect class="box" x="809.5" y="397.5" width="8" height="10"/>
<line class="md" x1="46.5" y1="480.5" x2="54.5" y2="480.5"/>
<line class="wh" x1="69.5" y1="456.62" x2="69.5" y2="457.5"/>
<line class="wh" x1="69.5" y1="459.5" x2="69.5" y2="460.43"/>
<line class="md" x1="65.5" y1="458.5" x2="73.5" y2="458.5"/>
<line class="wh" x1="88.5" y1="481.38" x2="88.5" y2="483.5"/>
<line class="wh" x1="88.5" y1="486.5" x2="88.5" y2="489.38"/>
<line class="md" x1="84.5" y1="485.5" x2="92.5" y2="485.5"/>
<line class="wh" x1="107.5" y1="442.71" x2="107.5" y2="447.5"/>
<line class="wh" x1="107.5" y1="450.5" x2="107.5" y2="451.67"/>
<line class="md" x1="103.5" y1="449.5" x2="111.5" y2="449.5"/>
<line class="wh" x1="126.5" y1="460.81" x2="126.5" y2="465.5"/>
<line class="wh" x1="126.5" y1="474.5" x2="126.5" y2="475.67"/>
<line class="md" x1="122.5" y1="469.5" x2="130.5" y2="469.5"/>
<line class="wh" x1="145.5" y1="449.76" x2="145.5" y2="452.5"/>
<line class="wh" x1="145.5" y1="468.5" x2="145.5" y2="470.71"/>
<line class="md" x1="141.5" y1="457.5" x2="149.5" y2="457.5"/>
<line class="wh" x1="164.5" y1="468.43" x2="164.5" y2="472.5"/>
<line class="wh" x1="164.5" y1="478.5" x2="164.5" y2="480.81"/>
<line class="md" x1="160.5" y1="475.5" x2="168.5" y2="475.5"/>
<line class="wh" x1="183.5" y1="430.71" x2="183.5" y2="433.5"/>
<line class="wh" x1="183.5" y1="438.5" x2="183.5" y2="451.67"/>
<line class="md" x1="179.5" y1="435.5" x2="187.5" y2="435.5"/>
<line class="wh" x1="203.5" y1="449.38" x2="203.5" y2="457.5"/>
<line class="wh" x1="203.5" y1="468.5" x2="203.5" y2="471.86"/>
<line class="md" x1="199.5" y1="463.5" x2="207.5" y2="463.5"/>
<line class="wh" x1="222.5" y1="452.24" x2="222.5" y2="455.5"/>
<line class="wh" x1="222.5" y1="465.5" x2="222.5" y2="469.95"/>
<line class="md" x1="218.5" y1="460.5" x2="226.5" y2="460.5"/>
<line class="wh" x1="241.5" y1="473.76" x2="241.5" y2="476.5"/>
<line class="wh" x1="241.5" y1="482.5" x2="241.5" y2="485.95"/>
<line class="md" x1="237.5" y1="479.5" x2="245.5" y2="479.5"/>
<line class="wh" x1="260.5" y1="438.9" x2="260.5" y2="440.5"/>
<line class="wh" x1="260.5" y1="443.5" x2="260.5" y2="446.52"/>
<line class="md" x1="256.5" y1="442.5" x2="264.5" y2="442.5"/>
<line class="wh" x1="279.5" y1="461.76" x2="279.5" y2="464.5"/>
<line class="wh" x1="279.5" y1="473.5" x2="279.5" y2="481.76"/>
<line class="md" x1="275.5" y1="468.5" x2="283.5" y2="468.5"/>
<line class="wh" x1="298.5" y1="452.24" x2="298.5" y2="459.5"/>
<line class="wh" x1="298.5" y1="472.5" x2="298.5" y2="477"/>
<line class="md" x1="294.5" y1="466.5" x2="302.5" y2="466.5"/>
<line class="wh" x1="317.5" y1="473.19" x2="317.5" y2="476.5"/>
<line class="wh" x1="317.5" y1="484.5" x2="317.5" y2="485.19"/>
<line class="md" x1="313.5" y1="480.5" x2="321.5" y2="480.5"/>
<line class="wh" x1="336.5" y1="436.43" x2="336.5" y2="439.5"/>
<line class="wh" x1="336.5" y1="448.5" x2="336.5" y2="450.9"/>
<line class="md" x1="332.5" y1="444.5" x2="340.5" y2="444.5"/>
<line class="wh" x1="355.5" y1="438.33" x2="355.5" y2="450.5"/>
<line class="wh" x1="355.5" y1="466.5" x2="355.5" y2="468.81"/>
<line class="md" x1="351.5" y1="460.5" x2="359.5" y2="460.5"/>
<line class="wh" x1="374.5" y1="444.62" x2="374.5" y2="455.5"/>
<line class="wh" x1="374.5" y1="467.5" x2="374.5" y2="473.19"/>
<line class="md" x1="370.5" y1="461.5" x2="378.5" y2="461.5"/>
<line class="wh" x1="393.5" y1="464.24" x2="393.5" y2="469.5"/>
<line class="wh" x1="393.5" y1="479.5" x2="393.5" y2="481.76"/>
<line class="md" x1="389.5" y1="474.5" x2="397.5" y2="474.5"/>
<line class="wh" x1="412.5" y1="437.57" x2="412.5" y2="439.5"/>
<line class="wh" x1="412.5" y1="445.5" x2="412.5" y2="448.43"/>
<line class="md" x1="408.5" y1="442.5" x2="416.5" y2="442.5"/>
<line class="wh" x1="431.5" y1="410.33" x2="431.5" y2="437.5"/>
<line class="wh" x1="431.5" y1="470.5" x2="431.5" y2="471.29"/>
<line class="md" x1="427.5" y1="457.5" x2="435.5" y2="457.5"/>
<line class="wh" x1="450.5" y1="440.24" x2="450.5" y2="450.5"/>
<line class="wh" x1="450.5" y1="465.5" x2="450.5" y2="468.81"/>
<line class="md" x1="446.5" y1="459.5" x2="454.5" y2="459.5"/>
<line class="wh" x1="469.5" y1="464.24" x2="469.5" y2="466.5"/>
<line class="wh" x1="469.5" y1="478.5" x2="469.5" y2="484.05"/>
<line class="md" x1="465.5" y1="473.5" x2="473.5" y2="473.5"/>
<line class="wh" x1="488.5" y1="422.33" x2="488.5" y2="432.5"/>
<line class="wh" x1="488.5" y1="448.5" x2="488.5" y2="449.38"/>
<line class="md" x1="484.5" y1="438.5" x2="492.5" y2="438.5"/>
<line class="wh" x1="508.5" y1="391.29" x2="508.5" y2="395.5"/>
<line class="wh" x1="508.5" y1="442.5" x2="508.5" y2="465"/>
<line class="md" x1="504.5" y1="416.5" x2="512.5" y2="416.5"/>
<line class="wh" x1="527.5" y1="446.52" x2="527.5" y2="454.5"/>
<line class="wh" x1="527.5" y1="478.5" x2="527.5" y2="481.38"/>
<line class="md" x1="523.5" y1="468.5" x2="531.5" y2="468.5"/>
<line class="wh" x1="546.5" y1="459.29" x2="546.5" y2="463.5"/>
<line class="wh" x1="546.5" y1="478.5" x2="546.5" y2="481.38"/>
<line class="md" x1="542.5" y1="470.5" x2="550.5" y2="470.5"/>
<line class="wh" x1="565.5" y1="431.29" x2="565.5" y2="437.5"/>
<line class="wh" x1="565.5" y1="454.5" x2="565.5" y2="460.43"/>
<line class="md" x1="561.5" y1="444.5" x2="569.5" y2="444.5"/>
<line class="wh" x1="584.5" y1="402.71" x2="584.5" y2="404.5"/>
<line class="wh" x1="584.5" y1="462.5" x2="584.5" y2="471.29"/>
<line class="md" x1="580.5" y1="417.5" x2="588.5" y2="417.5"/>
<line class="wh" x1="603.5" y1="445.19" x2="603.5" y2="450.5"/>
<line class="wh" x1="603.5" y1="470.5" x2="603.5" y2="477.95"/>
<line class="md" x1="599.5" y1="460.5" x2="607.5" y2="460.5"/>
<line class="wh" x1="622.5" y1="459.86" x2="622.5" y2="463.5"/>
<line class="wh" x1="622.5" y1="477.5" x2="622.5" y2="482.14"/>
<line class="md" x1="618.5" y1="472.5" x2="626.5" y2="472.5"/>
<line class="wh" x1="641.5" y1="437.95" x2="641.5" y2="443.5"/>
<line class="wh" x1="641.5" y1="460.5" x2="641.5" y2="466.14"/>
<line class="md" x1="637.5" y1="454.5" x2="645.5" y2="454.5"/>
<line class="wh" x1="660.5" y1="384.24" x2="660.5" y2="390.5"/>
<line class="wh" x1="660.5" y1="419.5" x2="660.5" y2="440.81"/>
<line class="md" x1="656.5" y1="408.5" x2="664.5" y2="408.5"/>
<line class="wh" x1="679.5" y1="439.48" x2="679.5" y2="447.5"/>
<line class="wh" x1="679.5" y1="469.5" x2="679.5" y2="475.1"/>
<line class="md" x1="675.5" y1="459.5" x2="683.5" y2="459.5"/>
<line class="wh" x1="698.5" y1="460.43" x2="698.5" y2="467.5"/>
<line class="wh" x1="698.5" y1="477.5" x2="698.5" y2="479.86"/>
<line class="md" x1="694.5" y1="472.5" x2="702.5" y2="472.5"/>
<line class="wh" x1="717.5" y1="439.48" x2="717.5" y2="451.5"/>
<line class="wh" x1="717.5" y1="466.5" x2="717.5" y2="468.05"/>
<line class="md" x1="713.5" y1="459.5" x2="721.5" y2="459.5"/>
<line class="wh" x1="736.5" y1="386.14" x2="736.5" y2="395.5"/>
<line class="wh" x1="736.5" y1="420.5" x2="736.5" y2="425.57"/>
<line class="md" x1="732.5" y1="405.5" x2="740.5" y2="405.5"/>
<line class="wh" x1="755.5" y1="462.33" x2="755.5" y2="464.5"/>
<line class="wh" x1="755.5" y1="476.5" x2="755.5" y2="483.86"/>
<line class="md" x1="751.5" y1="470.5" x2="759.5" y2="470.5"/>
<line class="wh" x1="774.5" y1="456.05" x2="774.5" y2="464.5"/>
<line class="wh" x1="774.5" y1="478.5" x2="774.5" y2="480.81"/>
<line class="md" x1="770.5" y1="471.5" x2="778.5" y2="471.5"/>
<line class="wh" x1="793.5" y1="447.1" x2="793.5" y2="451.5"/>
<line class="wh" x1="793.5" y1="465.5" x2="793.5" y2="472.62"/>
<line class="md" x1="789.5" y1="457.5" x2="797.5" y2="457.5"/>
<line class="wh" x1="813.5" y1="389.95" x2="813.5" y2="395.5"/>
<line class="wh" x1="813.5" y1="418.5" x2="813.5" y2="444.05"/>
<line class="md" x1="809.5" y1="402.5" x2="817.5" y2="402.5"/>
<polyline class="c" points="50.5,480.05 69.56,458.9 88.62,484.24 107.69,449.38 126.75,469.95 145.81,458.9 164.88,476.43 183.94,437.57 203,461.19 222.06,460.43 241.12,478.9 260.19,441.76 279.25,465 298.31,469.38 317.38,483.29 336.44,447.1 355.5,457 374.56,465.57 393.62,471.86 412.69,438.33 431.75,451.67 450.81,463.67 469.88,475.1 488.94,435.67 508,416.05 527.06,470.71 546.12,465 565.19,443.29 584.25,414.14 603.31,464.62 622.38,476.05 641.44,459.86 660.5,414.14 679.56,468.43 698.62,479.86 717.69,461.76 736.75,401.38 755.81,475.67 774.88,468.81 793.94,465 813,403.29"/>
<polyline class="m" points="50.5,480.05 69.56,458.9 88.62,484.24 107.69,449.38 126.75,469.38 145.81,458.9 164.88,475.1 183.94,437.57 203,462.33 222.06,460.81 241.12,478.9 260.19,442.71 279.25,468.05 298.31,466.9 317.38,480.81 336.44,445 355.5,459.29 374.56,461.76 393.62,472.24 412.69,443.29 431.75,455.1 450.81,459.29 469.88,471.29 488.94,438.9 508,418.52 527.06,467.48 546.12,470.33 565.19,445.95 584.25,423.67 603.31,461.19 622.38,470.71 641.44,454.14 660.5,408.43 679.56,459.29 698.62,471.86 717.69,458.9 736.75,407.1 755.81,470.71 774.88,471.29 793.94,457.95 813,405.57"/>
<rect class="ax" x="41" y="379.3" width="781.4" height="115.2"/>
<line class="tick" x1="50.5" y1="494.5" x2="50.5" y2="499.1"/>
<line class="tick" x1="126.75" y1="494.5" x2="126.75" y2="499.1"/>
<line class="tick" x1="203" y1="494.5" x2="203" y2="499.1"/>
<line class="tick" x1="279.25" y1="494.5" x2="279.25" y2="499.1"/>
<line class="tick" x1="355.5" y1="494.5" x2="355.5" y2="499.1"/>
<line class="tick" x1="431.75" y1="494.5" x2="431.75" y2="499.1"/>
<line class="tick" x1="508" y1="494.5" x2="508" y2="499.1"/>
<line class="tick" x1="584.25" y1="494.5" x2="584.25" y2="499.1"/>
<line class="tick" x1="660.5" y1="494.5" x2="660.5" y2="499.1"/>
<line class="tick" x1="736.75" y1="494.5" x2="736.75" y2="499.1"/>
<line class="tick" x1="813" y1="494.5" x2="813" y2="499.1"/>
<line class="tick" x1="36.3" y1="381.8" x2="41" y2="381.8"/>
<text class="tk" text-anchor="end" x="31.6" y="385.8">6</text>
<line class="tick" x1="36.3" y1="427.4" x2="41" y2="427.4"/>
<text class="tk" text-anchor="end" x="31.6" y="431.4">4</text>
<line class="tick" x1="36.3" y1="472.9" x2="41" y2="472.9"/>
<text class="tk" text-anchor="end" x="31.6" y="476.9">2</text>
</g>
<g>
<text class="pt" x="41.2" y="516.6">2m temperature (℃)</text>
<line class="grid" x1="50.5" y1="521.5" x2="50.5" y2="637"/>
<line class="grid" x1="126.5" y1="521.5" x2="126.5" y2="637"/>
<line class="grid" x1="203.5" y1="521.5" x2="203.5" y2="637"/>
<line class="grid" x1="279.5" y1="521.5" x2="279.5" y2="637"/>
<line class="grid" x1="355.5" y1="521.5" x2="355.5" y2="637"/>
<line class="grid" x1="431.5" y1="521.5" x2="431.5" y2="637"/>
<line class="grid" x1="508.5" y1="521.5" x2="508.5" y2="637"/>
<line class="grid" x1="584.5" y1="521.5" x2="584.5" y2="637"/>
<line class="grid" x1="660.5" y1="521.5" x2="660.5" y2="637"/>
<line class="grid" x1="736.5" y1="521.5" x2="736.5" y2="637"/>
<line class="grid" x1="813.5" y1="521.5" x2="813.5" y2="637"/>
<line class="grid" x1="41" y1="538.5" x2="822.4" y2="538.5"/>
<line class="grid" x1="41" y1="578.5" x2="822.4" y2="578.5"/>
<line class="grid" x1="41" y1="619.5" x2="822.4" y2="619.5"/>
<rect class="box" x="67.5" y="619.5" width="4" height="1"/>
<rect class="box" x="65.5" y="619.5" width="8" height="1"/>
<rect class="box" x="86.5" y="629.5" width="4" height="2"/>
<rect class="box" x="84.5" y="629.5" width="8" height="2"/>
<rect class="box" x="105.5" y="556.5" width="4" height="2"/>
<rect class="box" x="103.5" y="556.5" width="8" height="2"/>
<rect class="box" x="124.5" y="589.5" width="4" height="6"/>
<rect class="box" x="122.5" y="591.5" width="8" height="3"/>
<rect class="box" x="143.5" y="619.5" width="4" height="3"/>
<rect class="box" x="141.5" y="619.5" width="8" height="3"/>
<rect class="box" x="162.5" y="625.5" width="4" height="2"/>
<rect class="box" x="160.5" y="625.5" width="8" height="2"/>
<rect class="box" x="181.5" y="556.5" width="4" height="3"/>
<rect class="box" x="179.5" y="556.5" width="8" height="3"/>
<rect class="box" x="201.5" y="587.5" width="4" height="3"/>
<rect class="box" x="199.5" y="587.5" width="8" height="3"/>
<rect class="box" x="220.5" y="619.5" width="4" height="3"/>
<rect class="box" x="218.5" y="619.5" width="8" height="3"/>
<rect class="box" x="239.5" y="622.5" width="4" height="2"/>
<rect class="box" x="237.5" y="622.5" width="8" height="2"/>
<rect class="box" x="258.5" y="550.5" width="4" height="2"/>
<rect class="box" x="256.5" y="550.5" width="8" height="2"/>
<rect class="box" x="277.5" y="580.5" width="4" height="7"/>
<rect class="box" x="275.5" y="581.5" width="8" height="5"/>
<rect class="box" x="296.5" y="614.5" width="4" height="5"/>
<rect class="box" x="294.5" y="615.5" width="8" height="3"/>
<rect class="box" x="315.5" y="618.5" width="4" height="2"/>
<rect class="box" x="313.5" y="618.5" width="8" height="2"/>
<rect class="box" x="334.5" y="543.5" width="4" height="3"/>
<rect class="box" x="332.5" y="543.5" width="8" height="3"/>
<rect class="box" x="353.5" y="568.5" width="4" height="11"/>
<rect class="box" x="351.5" y="570.5" width="8" height="6"/>
<rect class="box" x="372.5" y="611.5" width="4" height="3"/>
<rect class="box" x="370.5" y="611.5" width="8" height="3"/>
<rect class="box" x="391.5" y="615.5" width="4" height="2"/>
<rect class="box" x="389.5" y="615.5" width="8" height="2"/>
<rect class="box" x="410.5" y="539.5" width="4" height="2"/>
<rect class="box" x="408.5" y="539.5" width="8" height="2"/>
<rect class="box" x="429.5" y="561.5" width="4" height="15"/>
<rect class="box" x="427.5" y="565.5" width="8" height="7"/>
<rect class="box" x="448.5" y="606.5" width="4" height="2"/>
<rect class="box" x="446.5" y="606.5" width="8" height="2"/>
<rect class="box" x="467.5" y="610.5" width="4" height="2"/>
<rect class="box" x="465.5" y="610.5" width="8" height="2"/>
<rect class="box" x="486.5" y="535.5" width="4" height="6"/>
<rect class="box" x="484.5" y="536.5" width="8" height="4"/>
<rect class="box" x="506.5" y="582.5" width="4" height="16"/>
<rect class="box" x="504.5" y="586.5" width="8" height="8"/>
<rect class="box" x="525.5" y="608.5" width="4" height="6"/>
<rect class="box" x="523.5" y="610.5" width="8" height="3"/>
<rect class="box" x="544.5" y="611.5" width="4" height="3"/>
<rect class="box" x="542.5" y="611.5" width="8" height="3"/>
<rect class="box" x="563.5" y="538.5" width="4" height="6"/>
<rect class="box" x="561.5" y="539.5" width="8" height="4"/>
<rect class="box" x="582.5" y="573.5" width="4" height="16"/>
<rect class="box" x="580.5" y="579.5" width="8" height="6"/>
<rect class="box" x="601.5" y="608.5" width="4" height="6"/>
<rect class="box" x="599.5" y="609.5" width="8" height="4"/>
<rect class="box" x="620.5" y="614.5" width="4" height="3"/>
<rect class="box" x="618.5" y="614.5" width="8" height="3"/>
<rect class="box" x="639.5" y="535.5" width="4" height="7"/>
<rect class="box" x="637.5" y="537.5" width="8" height="3"/>
<rect class="box" x="658.5" y="570.5" width="4" height="19"/>
<rect class="box" x="656.5" y="576.5" width="8" height="10"/>
<rect class="box" x="677.5" y="611.5" width="4" height="7"/>
<rect class="box" x="675.5" y="613.5" width="8" height="4"/>
<rect class="box" x="696.5" y="616.5" width="4" height="3"/>
<rect class="box" x="694.5" y="616.5" width="8" height="3"/>
<rect class="box" x="715.5" y="532.5" width="4" height="7"/>
<rect class="box" x="713.5" y="534.5" width="8" height="5"/>
<rect class="box" x="734.5" y="571.5" width="4" height="20"/>
<rect class="box" x="732.5" y="578.5" width="8" height="8"/>
<rect class="box" x="753.5" y="613.5" width="4" height="6"/>
<rect class="box" x="751.5" y="615.5" width="8" height="3"/>
<rect class="box" x="772.5" y="616.5" width="4" height="5"/>
<rect class="box" x="770.5" y="617.5" width="8" height="3"/>
<rect class="box" x="791.5" y="530.5" width="4" height="7"/>
<rect class="box" x="789.5" y="532.5" width="8" height="5"/>
<rect class="box" x="811.5" y="568.5" width="4" height="14"/>
<rect class="box" x="809.5" y="570.5" width="8" height="8"/>
<line class="md" x1="46.5" y1="601.5" x2="54.5" y2="601.5"/>
<line class="md" x1="65.5" y1="619.5" x2="73.5" y2="619.5"/>
<line class="md" x1="84.5" y1="630.5" x2="92.5" y2="630.5"/>
<line class="wh" x1="107.5" y1="555.57" x2="107.5" y2="556.5"/>
<line class="wh" x1="107.5" y1="558.5" x2="107.5" y2="559.38"/>
<line class="md" x1="103.5" y1="557.5" x2="111.5" y2="557.5"/>
<line class="wh" x1="126.5" y1="589.1" x2="126.5" y2="589.5"/>
<line class="wh" x1="126.5" y1="595.5" x2="126.5" y2="596.14"/>
<line class="md" x1="122.5" y1="592.5" x2="130.5" y2="592.5"/>
<line class="wh" x1="145.5" y1="618.05" x2="145.5" y2="619.5"/>
<line class="wh" x1="145.5" y1="622.5" x2="145.5" y2="624.14"/>
<line class="md" x1="141.5" y1="620.5" x2="149.5" y2="620.5"/>
<line class="md" x1="160.5" y1="626.5" x2="168.5" y2="626.5"/>
<line class="wh" x1="183.5" y1="555.19" x2="183.5" y2="556.5"/>
<line class="wh" x1="183.5" y1="559.5" x2="183.5" y2="559.38"/>
<line class="md" x1="179.5" y1="557.5" x2="187.5" y2="557.5"/>
<line class="wh" x1="203.5" y1="585.67" x2="203.5" y2="587.5"/>
<line class="wh" x1="203.5" y1="590.5" x2="203.5" y2="592.33"/>
<line class="md" x1="199.5" y1="588.5" x2="207.5" y2="588.5"/>
<line class="wh" x1="222.5" y1="618.43" x2="222.5" y2="619.5"/>
<line class="wh" x1="222.5" y1="622.5" x2="222.5" y2="623.38"/>
<line class="md" x1="218.5" y1="620.5" x2="226.5" y2="620.5"/>
<line class="md" x1="237.5" y1="623.5" x2="245.5" y2="623.5"/>
<line class="wh" x1="260.5" y1="549.48" x2="260.5" y2="550.5"/>
<line class="wh" x1="260.5" y1="552.5" x2="260.5" y2="554.24"/>
<line class="md" x1="256.5" y1="551.5" x2="264.5" y2="551.5"/>
<line class="wh" x1="279.5" y1="573.29" x2="279.5" y2="580.5"/>
<line class="wh" x1="279.5" y1="587.5" x2="279.5" y2="589.1"/>
<line class="md" x1="275.5" y1="583.5" x2="283.5" y2="583.5"/>
<line class="wh" x1="298.5" y1="611.38" x2="298.5" y2="614.5"/>
<line class="wh" x1="298.5" y1="619.5" x2="298.5" y2="619.95"/>
<line class="md" x1="294.5" y1="616.5" x2="302.5" y2="616.5"/>
<line class="md" x1="313.5" y1="619.5" x2="321.5" y2="619.5"/>
<line class="wh" x1="336.5" y1="542.81" x2="336.5" y2="543.5"/>
<line class="wh" x1="336.5" y1="546.5" x2="336.5" y2="547.57"/>
<line class="md" x1="332.5" y1="545.5" x2="340.5" y2="545.5"/>
<line class="wh" x1="355.5" y1="564.71" x2="355.5" y2="568.5"/>
<line class="wh" x1="355.5" y1="579.5" x2="355.5" y2="581.86"/>
<line class="md" x1="351.5" y1="573.5" x2="359.5" y2="573.5"/>
<line class="wh" x1="374.5" y1="610.05" x2="374.5" y2="611.5"/>
<line class="wh" x1="374.5" y1="614.5" x2="374.5" y2="618.43"/>
<line class="md" x1="370.5" y1="613.5" x2="378.5" y2="613.5"/>
<line class="wh" x1="393.5" y1="613.86" x2="393.5" y2="615.5"/>
<line class="wh" x1="393.5" y1="617.5" x2="393.5" y2="618.43"/>
<line class="md" x1="389.5" y1="616.5" x2="397.5" y2="616.5"/>
<line class="wh" x1="412.5" y1="538.05" x2="412.5" y2="539.5"/>
<line class="wh" x1="412.5" y1="541.5" x2="412.5" y2="542.81"/>
<line class="md" x1="408.5" y1="540.5" x2="416.5" y2="540.5"/>
<line class="wh" x1="431.5" y1="558.05" x2="431.5" y2="561.5"/>
<line class="wh" x1="431.5" y1="576.5" x2="431.5" y2="583.76"/>
<line class="md" x1="427.5" y1="570.5" x2="435.5" y2="570.5"/>
<line class="wh" x1="450.5" y1="604.71" x2="450.5" y2="606.5"/>
<line class="wh" x1="450.5" y1="608.5" x2="450.5" y2="610.81"/>
<line class="md" x1="446.5" y1="607.5" x2="454.5" y2="607.5"/>
<line class="wh" x1="469.5" y1="609.48" x2="469.5" y2="610.5"/>
<line class="wh" x1="469.5" y1="612.5" x2="469.5" y2="613.86"/>
<line class="md" x1="465.5" y1="611.5" x2="473.5" y2="611.5"/>
<line class="wh" x1="488.5" y1="534.62" x2="488.5" y2="535.5"/>
<line class="wh" x1="488.5" y1="541.5" x2="488.5" y2="546.62"/>
<line class="md" x1="484.5" y1="538.5" x2="492.5" y2="538.5"/>
<line class="wh" x1="508.5" y1="571.95" x2="508.5" y2="582.5"/>
<line class="wh" x1="508.5" y1="598.5" x2="508.5" y2="604.71"/>
<line class="md" x1="504.5" y1="589.5" x2="512.5" y2="589.5"/>
<line class="wh" x1="527.5" y1="607.57" x2="527.5" y2="608.5"/>
<line class="wh" x1="527.5" y1="614.5" x2="527.5" y2="616.52"/>
<line class="md" x1="523.5" y1="611.5" x2="531.5" y2="611.5"/>
<line class="wh" x1="546.5" y1="610.43" x2="546.5" y2="611.5"/>
<line class="wh" x1="546.5" y1="614.5" x2="546.5" y2="616.52"/>
<line class="md" x1="542.5" y1="613.5" x2="550.5" y2="613.5"/>
<line class="wh" x1="565.5" y1="536.14" x2="565.5" y2="538.5"/>
<line class="wh" x1="565.5" y1="544.5" x2="565.5" y2="549.48"/>
<line class="md" x1="561.5" y1="541.5" x2="569.5" y2="541.5"/>
<line class="wh" x1="584.5" y1="568.9" x2="584.5" y2="573.5"/>
<line class="wh" x1="584.5" y1="589.5" x2="584.5" y2="594.81"/>
<line class="md" x1="580.5" y1="582.5" x2="588.5" y2="582.5"/>
<line class="wh" x1="603.5" y1="607" x2="603.5" y2="608.5"/>
<line class="wh" x1="603.5" y1="614.5" x2="603.5" y2="616.14"/>
<line class="md" x1="599.5" y1="611.5" x2="607.5" y2="611.5"/>
<line class="wh" x1="622.5" y1="612.71" x2="622.5" y2="614.5"/>
<line class="wh" x1="622.5" y1="617.5" x2="622.5" y2="619.57"/>
<line class="md" x1="618.5" y1="616.5" x2="626.5" y2="616.5"/>
<line class="wh" x1="641.5" y1="533.86" x2="641.5" y2="535.5"/>
<line class="wh" x1="641.5" y1="542.5" x2="641.5" y2="543.38"/>
<line class="md" x1="637.5" y1="539.5" x2="645.5" y2="539.5"/>
<line class="wh" x1="660.5" y1="566.24" x2="660.5" y2="570.5"/>
<line class="wh" x1="660.5" y1="589.5" x2="660.5" y2="594.81"/>
<line class="md" x1="656.5" y1="581.5" x2="664.5" y2="581.5"/>
<line class="wh" x1="679.5" y1="608.9" x2="679.5" y2="611.5"/>
<line class="wh" x1="679.5" y1="618.5" x2="679.5" y2="620.9"/>
<line class="md" x1="675.5" y1="615.5" x2="683.5" y2="615.5"/>
<line class="wh" x1="698.5" y1="614.24" x2="698.5" y2="616.5"/>
<line class="wh" x1="698.5" y1="619.5" x2="698.5" y2="621.86"/>
<line class="md" x1="694.5" y1="618.5" x2="702.5" y2="618.5"/>
<line class="wh" x1="717.5" y1="530.05" x2="717.5" y2="532.5"/>
<line class="wh" x1="717.5" y1="539.5" x2="717.5" y2="542.81"/>
<line class="md" x1="713.5" y1="537.5" x2="721.5" y2="537.5"/>
<line class="wh" x1="736.5" y1="568.9" x2="736.5" y2="571.5"/>
<line class="wh" x1="736.5" y1="591.5" x2="736.5" y2="598.62"/>
<line class="md" x1="732.5" y1="581.5" x2="740.5" y2="581.5"/>
<line class="wh" x1="755.5" y1="611.95" x2="755.5" y2="613.5"/>
<line class="wh" x1="755.5" y1="619.5" x2="755.5" y2="624.71"/>
<line class="md" x1="751.5" y1="616.5" x2="759.5" y2="616.5"/>
<line class="wh" x1="774.5" y1="615.19" x2="774.5" y2="616.5"/>
<line class="wh" x1="774.5" y1="621.5" x2="774.5" y2="625.29"/>
<line class="md" x1="770.5" y1="618.5" x2="778.5" y2="618.5"/>
<line class="wh" x1="793.5" y1="526.24" x2="793.5" y2="530.5"/>
<line class="wh" x1="793.5" y1="537.5" x2="793.5" y2="538.05"/>
<line class="md" x1="789.5" y1="535.5" x2="797.5" y2="535.5"/>
<line class="wh" x1="813.5" y1="564.33" x2="813.5" y2="568.5"/>
<line class="wh" x1="813.5" y1="582.5" x2="813.5" y2="586.62"/>
<line class="md" x1="809.5" y1="574.5" x2="817.5" y2="574.5"/>
<polyline class="c" points="50.5,601.29 69.56,619.95 88.62,630.05 107.69,557.48 126.75,593.67 145.81,619.95 164.88,625.67 183.94,556.71 203,589.1 222.06,620.9 241.12,623.76 260.19,551.76 279.25,585.29 298.31,619 317.38,620.33 336.44,544.14 355.5,572.33 374.56,612.33 393.62,613.86 412.69,540.9 431.75,575.19 450.81,607 469.88,611.38 488.94,539 508,599 527.06,613.29 546.12,614.24 565.19,543.38 584.25,584.71 603.31,613.29 622.38,617.1 641.44,540.9 660.5,587.57 679.56,619 698.62,621.48 717.69,540.33 736.75,581.48 755.81,617.1 774.88,618.43 793.94,537.67 813,566.24"/>
<polyline class="m" points="50.5,601.29 69.56,619.95 88.62,630.05 107.69,558.05 126.75,592.9 145.81,620.33 164.88,626.24 183.94,558.24 203,588.71 222.06,620.9 241.12,623.76 260.19,551.76 279.25,583.38 298.31,616.52 317.38,619 336.44,545.67 355.5,573.29 374.56,613.48 393.62,615.19 412.69,540.33 431.75,570.05 450.81,607.57 469.88,611.95 488.94,539.57 508,592.33 527.06,611.38 546.12,613.29 565.19,543.38 584.25,583.76 603.31,611.38 622.38,615.76 641.44,540.33 660.5,581.48 679.56,614.62 698.62,617.67 717.69,538.43 736.75,580.9 755.81,616.52 774.88,618.43 793.94,537.1 813,570.43"/>
<rect class="ax" x="41" y="521.5" width="781.4" height="115.5"/>
<line class="tick" x1="50.5" y1="637" x2="50.5" y2="641.6"/>
<line class="tick" x1="126.75" y1="637" x2="126.75" y2="641.6"/>
<line class="tick" x1="203" y1="637" x2="203" y2="641.6"/>
<line class="tick" x1="279.25" y1="637" x2="279.25" y2="641.6"/>
<line class="tick" x1="355.5" y1="637" x2="355.5" y2="641.6"/>
<line class="tick" x1="431.75" y1="637" x2="431.75" y2="641.6"/>
<line class="tick" x1="508" y1="637" x2="508" y2="641.6"/>
<line class="tick" x1="584.25" y1="637" x2="584.25" y2="641.6"/>
<line class="tick" x1="660.5" y1="637" x2="660.5" y2="641.6"/>
<line class="tick" x1="736.75" y1="637" x2="736.75" y2="641.6"/>
<line class="tick" x1="813" y1="637" x2="813" y2="641.6"/>
<line class="tick" x1="36.3" y1="538.1" x2="41" y2="538.1"/>
<text class="tk" text-anchor="end" x="31.6" y="542.1">35</text>
<line class="tick" x1="36.3" y1="578.5" x2="41" y2="578.5"/>
<text class="tk" text-anchor="end" x="31.6" y="582.5">30</text>
<line class="tick" x1="36.3" y1="619" x2="41" y2="619"/>
<text class="tk" text-anchor="end" x="31.6" y="623">25</text>
</g>
<text class="tk" text-anchor="middle" x="50.5" y="654.7">12Z</text>
<text class="tk" text-anchor="middle" x="50.5" y="667.2">22Mar</text>
<text class="tk" text-anchor="middle" x="126.75" y="654.7">12Z</text>
<text class="tk" text-anchor="middle" x="126.75" y="667.2">23Mar</text>
<text class="tk" text-anchor="middle" x="203" y="654.7">12Z</text>
<text class="tk" text-anchor="middle" x="203" y="667.2">24Mar</text>
<text class="tk" text-anchor="middle" x="279.25" y="654.7">12Z</text>
<text class="tk" text-anchor="middle" x="279.25" y="667.2">25Mar</text>
<text class="tk" text-anchor="middle" x="355.5" y="654.7">12Z</text>
<text class="tk" text-anchor="middle" x="355.5" y="667.2">26Mar</text>
<text class="tk" text-anchor="middle" x="431.75" y="654.7">12Z</text>
<text class="tk" text-anchor="middle" x="431.75" y="667.2">27Mar</text>
<text class="tk" text-anchor="middle" x="508" y="654.7">12Z</text>
<text class="tk" text-anchor="middle" x="508" y="667.2">28Mar</text>
<text class="tk" text-anchor="middle" x="584.25" y="654.7">12Z</text>
<text class="tk" text-anchor="middle" x="584.25" y="667.2">29Mar</text>
<text class="tk" text-anchor="middle" x="660.5" y="654.7">12Z</text>
<text class="tk" text-anchor="middle" x="660.5" y="667.2">30Mar</text>
<text class="tk" text-anchor="middle" x="736.75" y="654.7">12Z</text>
<text class="tk" text-anchor="middle" x="736.75" y="667.2">31Mar</text>
<text class="tk" text-anchor="middle" x="813" y="654.7">12Z</text>
<text class="tk" text-anchor="middle" x="813" y="667.2">01Apr</text>
</svg></body></html>
